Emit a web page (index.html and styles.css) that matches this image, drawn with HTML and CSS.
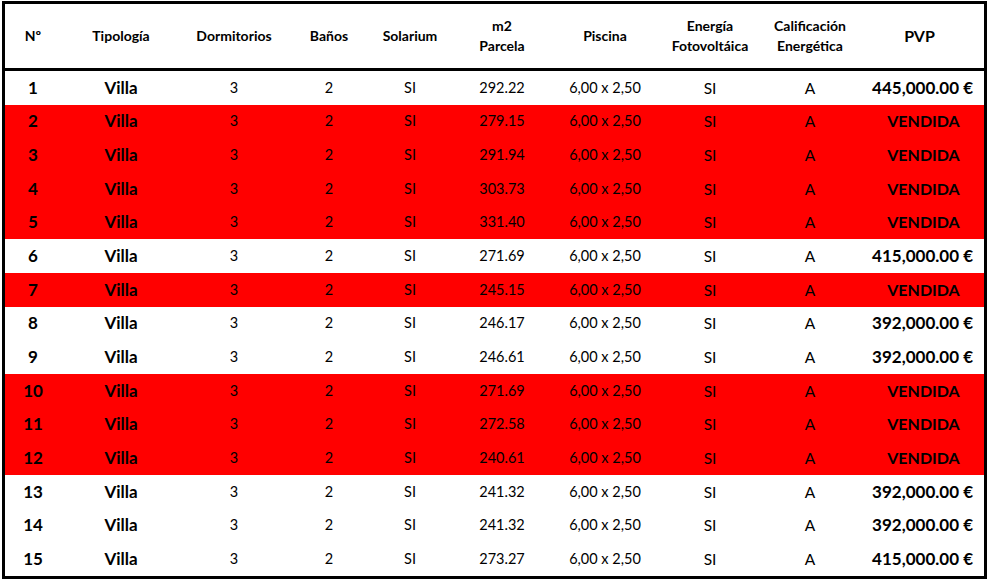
FILE: index.html
```html
<!DOCTYPE html>
<html lang="es">
<head>
<meta charset="utf-8">
<title>Villas</title>
<link rel="stylesheet" href="styles.css">
</head>
<body>
<table class="sheet">
  <colgroup>
    <col class="c1"><col class="c2"><col class="c3"><col class="c4"><col class="c5">
    <col class="c6"><col class="c7"><col class="c8"><col class="c9"><col class="c10">
  </colgroup>
  <thead>
    <tr>
      <th>Nº</th><th>Tipología</th><th>Dormitorios</th><th>Baños</th><th>Solarium</th>
      <th>m2<br>Parcela</th><th>Piscina</th><th>Energía<br>Fotovoltáica</th><th>Calificación<br>Energética</th><th class="pvph">PVP</th>
    </tr>
  </thead>
  <tbody>
    <tr><td class="num">1</td><td class="tip">Villa</td><td>3</td><td>2</td><td>SI</td><td>292.22</td><td>6,00 x 2,50</td><td class="lg">SI</td><td class="lg">A</td><td class="price">445,000.00 €</td></tr>
    <tr class="sold"><td class="num">2</td><td class="tip">Villa</td><td>3</td><td>2</td><td>SI</td><td>279.15</td><td>6,00 x 2,50</td><td class="lg">SI</td><td class="lg">A</td><td class="vend">VENDIDA</td></tr>
    <tr class="sold"><td class="num">3</td><td class="tip">Villa</td><td>3</td><td>2</td><td>SI</td><td>291.94</td><td>6,00 x 2,50</td><td class="lg">SI</td><td class="lg">A</td><td class="vend">VENDIDA</td></tr>
    <tr class="sold"><td class="num">4</td><td class="tip">Villa</td><td>3</td><td>2</td><td>SI</td><td>303.73</td><td>6,00 x 2,50</td><td class="lg">SI</td><td class="lg">A</td><td class="vend">VENDIDA</td></tr>
    <tr class="sold"><td class="num">5</td><td class="tip">Villa</td><td>3</td><td>2</td><td>SI</td><td>331.40</td><td>6,00 x 2,50</td><td class="lg">SI</td><td class="lg">A</td><td class="vend">VENDIDA</td></tr>
    <tr><td class="num">6</td><td class="tip">Villa</td><td>3</td><td>2</td><td>SI</td><td>271.69</td><td>6,00 x 2,50</td><td class="lg">SI</td><td class="lg">A</td><td class="price">415,000.00 €</td></tr>
    <tr class="sold"><td class="num">7</td><td class="tip">Villa</td><td>3</td><td>2</td><td>SI</td><td>245.15</td><td>6,00 x 2,50</td><td class="lg">SI</td><td class="lg">A</td><td class="vend">VENDIDA</td></tr>
    <tr><td class="num">8</td><td class="tip">Villa</td><td>3</td><td>2</td><td>SI</td><td>246.17</td><td>6,00 x 2,50</td><td class="lg">SI</td><td class="lg">A</td><td class="price">392,000.00 €</td></tr>
    <tr><td class="num">9</td><td class="tip">Villa</td><td>3</td><td>2</td><td>SI</td><td>246.61</td><td>6,00 x 2,50</td><td class="lg">SI</td><td class="lg">A</td><td class="price">392,000.00 €</td></tr>
    <tr class="sold"><td class="num">10</td><td class="tip">Villa</td><td>3</td><td>2</td><td>SI</td><td>271.69</td><td>6,00 x 2,50</td><td class="lg">SI</td><td class="lg">A</td><td class="vend">VENDIDA</td></tr>
    <tr class="sold"><td class="num">11</td><td class="tip">Villa</td><td>3</td><td>2</td><td>SI</td><td>272.58</td><td>6,00 x 2,50</td><td class="lg">SI</td><td class="lg">A</td><td class="vend">VENDIDA</td></tr>
    <tr class="sold"><td class="num">12</td><td class="tip">Villa</td><td>3</td><td>2</td><td>SI</td><td>240.61</td><td>6,00 x 2,50</td><td class="lg">SI</td><td class="lg">A</td><td class="vend">VENDIDA</td></tr>
    <tr><td class="num">13</td><td class="tip">Villa</td><td>3</td><td>2</td><td>SI</td><td>241.32</td><td>6,00 x 2,50</td><td class="lg">SI</td><td class="lg">A</td><td class="price">392,000.00 €</td></tr>
    <tr><td class="num">14</td><td class="tip">Villa</td><td>3</td><td>2</td><td>SI</td><td>241.32</td><td>6,00 x 2,50</td><td class="lg">SI</td><td class="lg">A</td><td class="price">392,000.00 €</td></tr>
    <tr><td class="num">15</td><td class="tip">Villa</td><td>3</td><td>2</td><td>SI</td><td>273.27</td><td>6,00 x 2,50</td><td class="lg">SI</td><td class="lg">A</td><td class="price">415,000.00 €</td></tr>
  </tbody>
</table>
</body>
</html>
```
FILE: styles.css
```css
html, body {
  margin: 0;
  padding: 0;
  background: #ffffff;
}
body {
  padding: 1px 2px;
  font-family: Lato, "Open Sans", "Liberation Sans", sans-serif;
  color: #000000;
}
.sheet {
  table-layout: fixed;
  border-collapse: separate;
  border-spacing: 0;
  border: 3px solid #000000;
  width: 985px;
}
.c1 { width: 56px; }
.c2 { width: 120px; }
.c3 { width: 106px; }
.c4 { width: 84px; }
.c5 { width: 78px; }
.c6 { width: 106px; }
.c7 { width: 100px; }
.c8 { width: 110px; }
.c9 { width: 90px; }
.c10 { width: 129px; }
.sheet th {
  height: 64px;
  padding: 0;
  font-size: 14px;
  line-height: 20px;
  font-weight: 700;
  text-align: center;
  vertical-align: middle;
  border-bottom: 3px solid #000000;
}
.sheet th.pvph {
  font-size: 16px;
}
.sheet td {
  height: 33.67px;
  padding: 0;
  font-size: 14.5px;
  line-height: 18px;
  text-align: center;
  vertical-align: middle;
  white-space: nowrap;
}
.sheet td.num,
.sheet td.tip {
  font-size: 17px;
  font-weight: 700;
}
.sheet td.lg {
  font-size: 15.5px;
}
.sheet td.price {
  font-size: 17px;
  font-weight: 700;
  text-align: right;
  padding-right: 11px;
}
.sheet td.vend {
  font-size: 16px;
  font-weight: 700;
  padding-left: 8px;
}
.sold td {
  background: #ff0000;
}
```
